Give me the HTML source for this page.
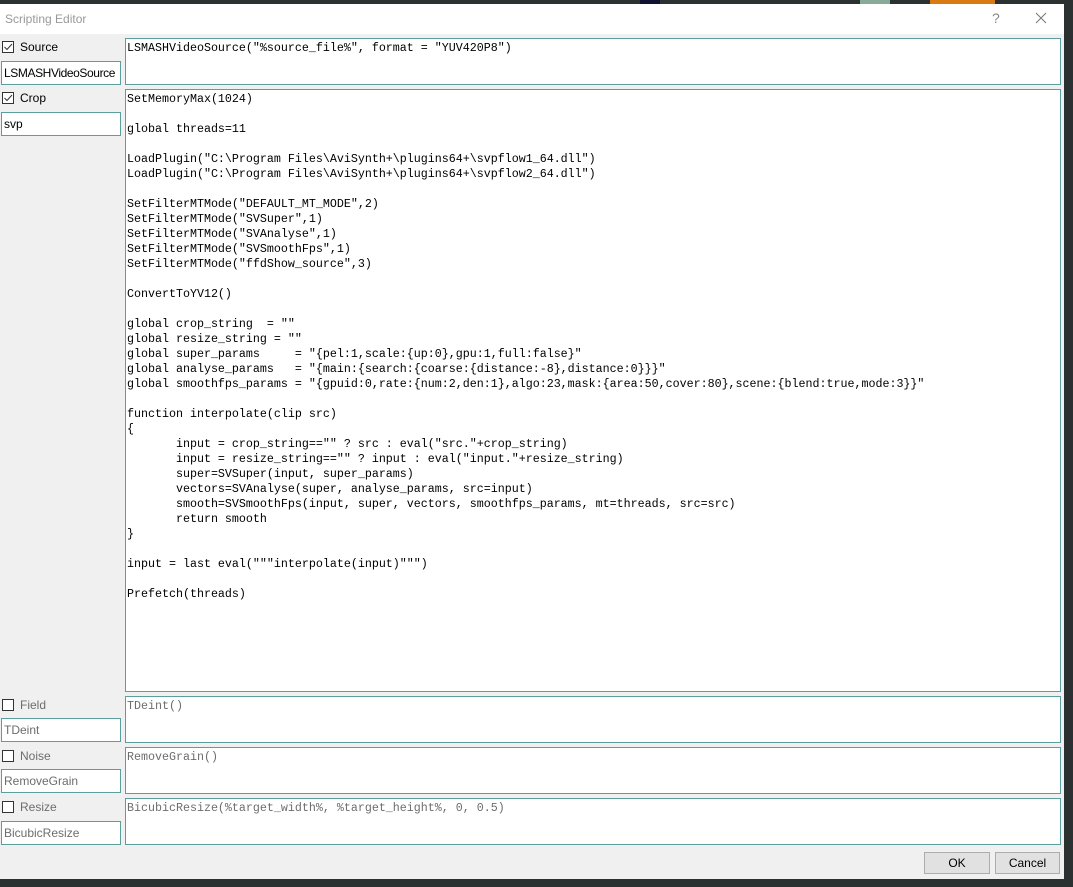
<!DOCTYPE html>
<html><head><style>
body{margin:0;width:1073px;height:887px;background:#2b3030;position:relative;overflow:hidden;font-family:"Liberation Sans",sans-serif;}
.win{position:absolute;left:0;top:4px;width:1064px;height:875px;background:#f0f0f0;}
.title{position:absolute;left:0;top:0;width:1064px;height:30px;background:#fff;}
.title span{position:absolute;left:5px;top:8px;font-size:12px;color:#999;}
.q{position:absolute;left:992px;top:6px;font-size:14px;color:#888;}
.x{position:absolute;left:1035px;top:8px;}
.box{position:absolute;background:#fff;border:1px solid #5a9e9e;box-sizing:border-box;}
.code{position:absolute;left:125px;width:936px;font-family:"Liberation Mono",monospace;font-size:11.67px;line-height:15px;white-space:pre;padding:2px 0 0 1px;}
.tb{left:1px;width:120px;height:24px;font-size:12px;padding:4px 2px;white-space:nowrap;overflow:hidden;}
.cb{position:absolute;left:2px;width:12px;height:12px;border:1px solid #333;background:#fff;box-sizing:border-box;}
.lbl{position:absolute;left:20px;font-size:12px;}
.dis{color:#6d6d6d;}
.btn{position:absolute;top:852px;height:22px;background:#e1e1e1;border:1px solid #adadad;box-sizing:border-box;font-size:12px;text-align:center;line-height:20px;}
</style></head><body>
<div style="position:absolute;left:640px;top:0;width:20px;height:4px;background:#113"></div>
<div style="position:absolute;left:930px;top:0;width:65px;height:4px;background:#d97a12"></div>
<div style="position:absolute;left:860px;top:0;width:30px;height:4px;background:#8a9"></div>
<div class="win">
<div class="title"><span>Scripting Editor</span><div class="q">?</div>
<svg class="x" width="12" height="12"><path d="M1 1L11 11M11 1L1 11" stroke="#777" stroke-width="1"/></svg></div>
</div>
<div class="cb" style="top:41px"><svg width="10" height="10" style="position:absolute;left:0;top:0"><path d="M1.5 5L4 7.5L9 2" stroke="#333" fill="none"/></svg></div>
<div class="lbl" style="top:40px">Source</div>
<div class="box tb" style="top:61px;letter-spacing:-0.4px">LSMASHVideoSource</div>
<div class="cb" style="top:92px"><svg width="10" height="10" style="position:absolute;left:0;top:0"><path d="M1.5 5L4 7.5L9 2" stroke="#333" fill="none"/></svg></div>
<div class="lbl" style="top:91px">Crop</div>
<div class="box tb" style="top:112px">svp</div>
<div class="cb" style="top:699px"></div><div class="lbl dis" style="top:698px">Field</div>
<div class="box tb dis" style="top:718px">TDeint</div>
<div class="cb" style="top:750px"></div><div class="lbl dis" style="top:749px">Noise</div>
<div class="box tb dis" style="top:769px">RemoveGrain</div>
<div class="cb" style="top:801px"></div><div class="lbl dis" style="top:800px">Resize</div>
<div class="box tb dis" style="top:821px">BicubicResize</div>

<div class="box code" style="top:38px;height:47px">LSMASHVideoSource("%source_file%", format = "YUV420P8")</div>
<div class="box code" style="top:89px;height:603px">SetMemoryMax(1024)

global threads=11

LoadPlugin("C:\Program Files\AviSynth+\plugins64+\svpflow1_64.dll")
LoadPlugin("C:\Program Files\AviSynth+\plugins64+\svpflow2_64.dll")

SetFilterMTMode("DEFAULT_MT_MODE",2)
SetFilterMTMode("SVSuper",1)
SetFilterMTMode("SVAnalyse",1)
SetFilterMTMode("SVSmoothFps",1)
SetFilterMTMode("ffdShow_source",3)

ConvertToYV12()

global crop_string  = ""
global resize_string = ""
global super_params     = "{pel:1,scale:{up:0},gpu:1,full:false}"
global analyse_params   = "{main:{search:{coarse:{distance:-8},distance:0}}}"
global smoothfps_params = "{gpuid:0,rate:{num:2,den:1},algo:23,mask:{area:50,cover:80},scene:{blend:true,mode:3}}"

function interpolate(clip src)
{
       input = crop_string=="" ? src : eval("src."+crop_string)
       input = resize_string=="" ? input : eval("input."+resize_string)
       super=SVSuper(input, super_params)
       vectors=SVAnalyse(super, analyse_params, src=input)
       smooth=SVSmoothFps(input, super, vectors, smoothfps_params, mt=threads, src=src)
       return smooth
}

input = last eval("""interpolate(input)""")

Prefetch(threads)</div>
<div class="box code dis" style="top:696px;height:47px">TDeint()</div>
<div class="box code dis" style="top:747px;height:47px">RemoveGrain()</div>
<div class="box code dis" style="top:798px;height:47px">BicubicResize(%target_width%, %target_height%, 0, 0.5)</div>
<div class="btn" style="left:924px;width:66px">OK</div>
<div class="btn" style="left:995px;width:65px">Cancel</div>
</body></html>
